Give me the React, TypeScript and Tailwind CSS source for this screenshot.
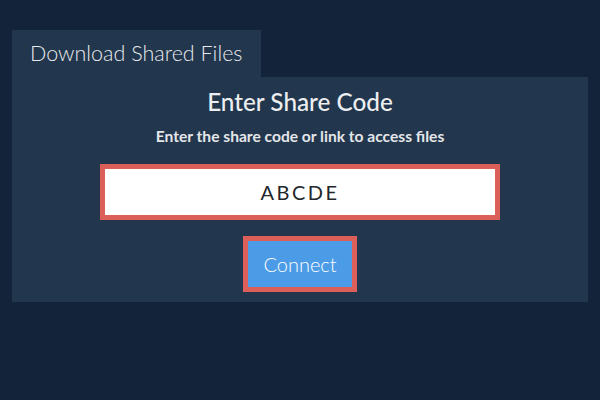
import React from 'react';

const App = () => {
  return (
    <div className="min-h-screen w-full bg-[#12233a] pt-[30px] px-[12px] font-['Lato','Liberation_Sans',sans-serif]">
      <div className="w-[249px] h-[47px] bg-[#22364d] flex items-center pl-[18px] text-[21.5px] font-light text-[#e8eaec]">
        Download Shared Files
      </div>
      <div className="bg-[#22364d] h-[225px] flex flex-col items-center pt-[10px]">
        <h1 className="text-[24.3px] leading-[30px] font-medium text-[#eceef0]">Enter Share Code</h1>
        <p className="mt-[9px] text-[15.6px] leading-[20px] font-bold text-[#e4e6e9]">
          Enter the share code or link to access files
        </p>
        <input
          readOnly
          defaultValue="ABCDE"
          className="mt-[18px] w-[400px] h-[56px] border-[5px] border-[#dc5f5a] bg-white text-center text-[20px] tracking-[2.5px] text-[#23262b] outline-none"
        />
        <button className="mt-[16px] w-[114px] h-[56px] border-[5px] border-[#dc5f5a] bg-[#4b9be6] text-white text-[20px] font-light">
          Connect
        </button>
      </div>
    </div>
  );
};

export default App;
